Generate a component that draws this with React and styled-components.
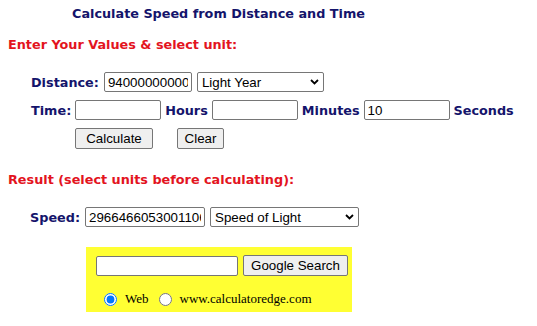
import React from "react";
import styled, { createGlobalStyle } from "styled-components";

const GlobalStyle = createGlobalStyle`
  body {
    margin: 0;
    background: #fff;
    font-family: "DejaVu Sans", Verdana, sans-serif;
  }
`;

const Page = styled.div`
  width: 537px;
  height: 326px;
  overflow: hidden;
`;

const Title = styled.h1`
  margin: 0;
  padding: 6px 0 0 72px;
  font-size: 12.8px;
  line-height: 16px;
  font-weight: bold;
  color: #14146b;
`;

const Heading = styled.h2`
  margin: ${(p) => p.$top}px 0 0 8px;
  font-size: 12.8px;
  line-height: 16px;
  font-weight: bold;
  color: #e3141e;
`;

const Row = styled.div`
  display: flex;
  align-items: center;
  gap: ${(p) => p.$gap || 5}px;
  margin: ${(p) => p.$top}px 0 0 ${(p) => p.$left}px;
  height: 20px;
`;

const Label = styled.span`
  font-size: 12.8px;
  font-weight: bold;
  color: #14146b;
`;

const TextInput = styled.input`
  box-sizing: border-box;
  width: ${(p) => p.$w}px;
  height: 20px;
  padding: 1px 3px;
  border: 1px solid #767676;
  border-radius: 2px;
  font-family: "Liberation Sans", Arial, sans-serif;
  font-size: 13.33px;
  color: #000;
  background: #fff;
`;

const SelectWrap = styled.span`
  position: relative;
  display: inline-flex;
`;

const Select = styled.select`
  box-sizing: border-box;
  appearance: none;
  width: ${(p) => p.$w}px;
  height: 20px;
  padding: 0 18px 0 4px;
  border: 1px solid #767676;
  border-radius: 2px;
  font-family: "Liberation Sans", Arial, sans-serif;
  font-size: 13.33px;
  color: #000;
  background: #fff;
`;

const Chevron = styled.svg`
  position: absolute;
  right: 5px;
  top: 7px;
  pointer-events: none;
`;

const Button = styled.button`
  box-sizing: border-box;
  width: ${(p) => p.$w}px;
  height: 21px;
  padding: 0;
  border: 1px solid #767676;
  border-radius: 2px;
  background: #efefef;
  font-family: "Liberation Sans", Arial, sans-serif;
  font-size: 13.33px;
  color: #000;
`;

const SearchBox = styled.div`
  margin: 20px 0 0 86px;
  width: 266px;
  height: 65px;
  box-sizing: border-box;
  padding: 8px 0 0 10px;
  background: #ffff33;
`;

const SearchRow = styled.div`
  display: flex;
  align-items: center;
  gap: 5px;
`;

const RadioRow = styled.div`
  display: flex;
  align-items: center;
  margin: 15px 0 0 8px;
  font-family: "Liberation Serif", "Times New Roman", serif;
  font-size: 13px;
  color: #000;
`;

const Radio = styled.input`
  margin: 0 8px 0 ${(p) => p.$left || 0}px;
  width: 13px;
  height: 13px;
  accent-color: #0075ff;
`;

const Dropdown = ({ w, children }) => (
  <SelectWrap>
    <Select $w={w}>{children}</Select>
    <Chevron width="9" height="6" viewBox="0 0 9 6">
      <path d="M1 1 L4.5 4.5 L8 1" fill="none" stroke="#000" strokeWidth="1.8" />
    </Chevron>
  </SelectWrap>
);

export default function App() {
  return (
    <Page>
      <GlobalStyle />
      <Title>Calculate Speed from Distance and Time</Title>
      <Heading $top={15}>Enter Your Values &amp; select unit:</Heading>

      <Row $top={19} $left={31}>
        <Label>Distance:</Label>
        <TextInput $w={88} defaultValue="9400000000000" />
        <Dropdown w={127}>
          <option>Light Year</option>
        </Dropdown>
      </Row>

      <Row $top={8} $left={31} $gap={4}>
        <Label>Time:</Label>
        <TextInput $w={86} />
        <Label>Hours</Label>
        <TextInput $w={86} />
        <Label>Minutes</Label>
        <TextInput $w={86} defaultValue="10" />
        <Label>Seconds</Label>
      </Row>

      <Row $top={8} $left={75} $gap={24}>
        <Button $w={78}>Calculate</Button>
        <Button $w={47}>Clear</Button>
      </Row>

      <Heading $top={24}>Result (select units before calculating):</Heading>

      <Row $top={19} $left={30}>
        <Label>Speed:</Label>
        <TextInput $w={120} defaultValue="29664660530011060" />
        <Dropdown w={149}>
          <option>Speed of Light</option>
        </Dropdown>
      </Row>

      <SearchBox>
        <SearchRow>
          <TextInput $w={142} />
          <Button $w={105}>Google Search</Button>
        </SearchRow>
        <RadioRow>
          <Radio type="radio" name="site" defaultChecked />
          Web
          <Radio type="radio" name="site" $left={10} />
          www.calculatoredge.com
        </RadioRow>
      </SearchBox>
    </Page>
  );
}
